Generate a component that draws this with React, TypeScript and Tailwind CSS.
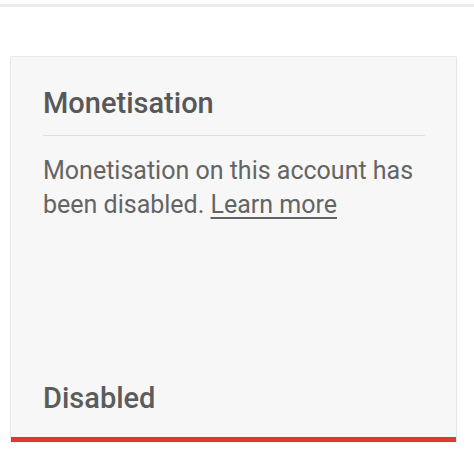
export default function App() {
  return (
    <div className="w-[474px] h-[471px] bg-white overflow-hidden" style={{ fontFamily: 'Roboto, "Noto Sans", sans-serif' }}>
      {/* top divider from the section above */}
      <div className="h-[3px] mt-[4px] bg-[#ececec]" />

      <div className="flex pt-[49px] pl-[10px] pr-[16px]">
        <div className="w-[447px] h-[386px] flex flex-col bg-[#f7f7f7] border border-[#e8e8e8] border-b-0 rounded-t-[2px] shadow-[0_1px_2px_rgba(0,0,0,0.05)]">
          <div className="pl-[32px] pr-[31px] pt-[28px] flex-1">
            <h2 className="text-[29px] leading-[36px] font-medium text-[#585858]">Monetisation</h2>
            <div className="h-px bg-[#e0e0e0] mt-[14px]" />
            <p className="mt-[18px] text-[25px] leading-[34px] text-[#646464]">
              Monetisation on this account has been disabled.{' '}
              <span className="underline underline-offset-[4px] decoration-[1.5px]">Learn more</span>
            </p>
          </div>
          <div className="px-[32px] pb-[21px] text-[29px] leading-[36px] font-medium text-[#5c5c5c]">Disabled</div>
          <div className="h-[5px] bg-[#d93a37]" />
        </div>
      </div>
    </div>
  )
}
